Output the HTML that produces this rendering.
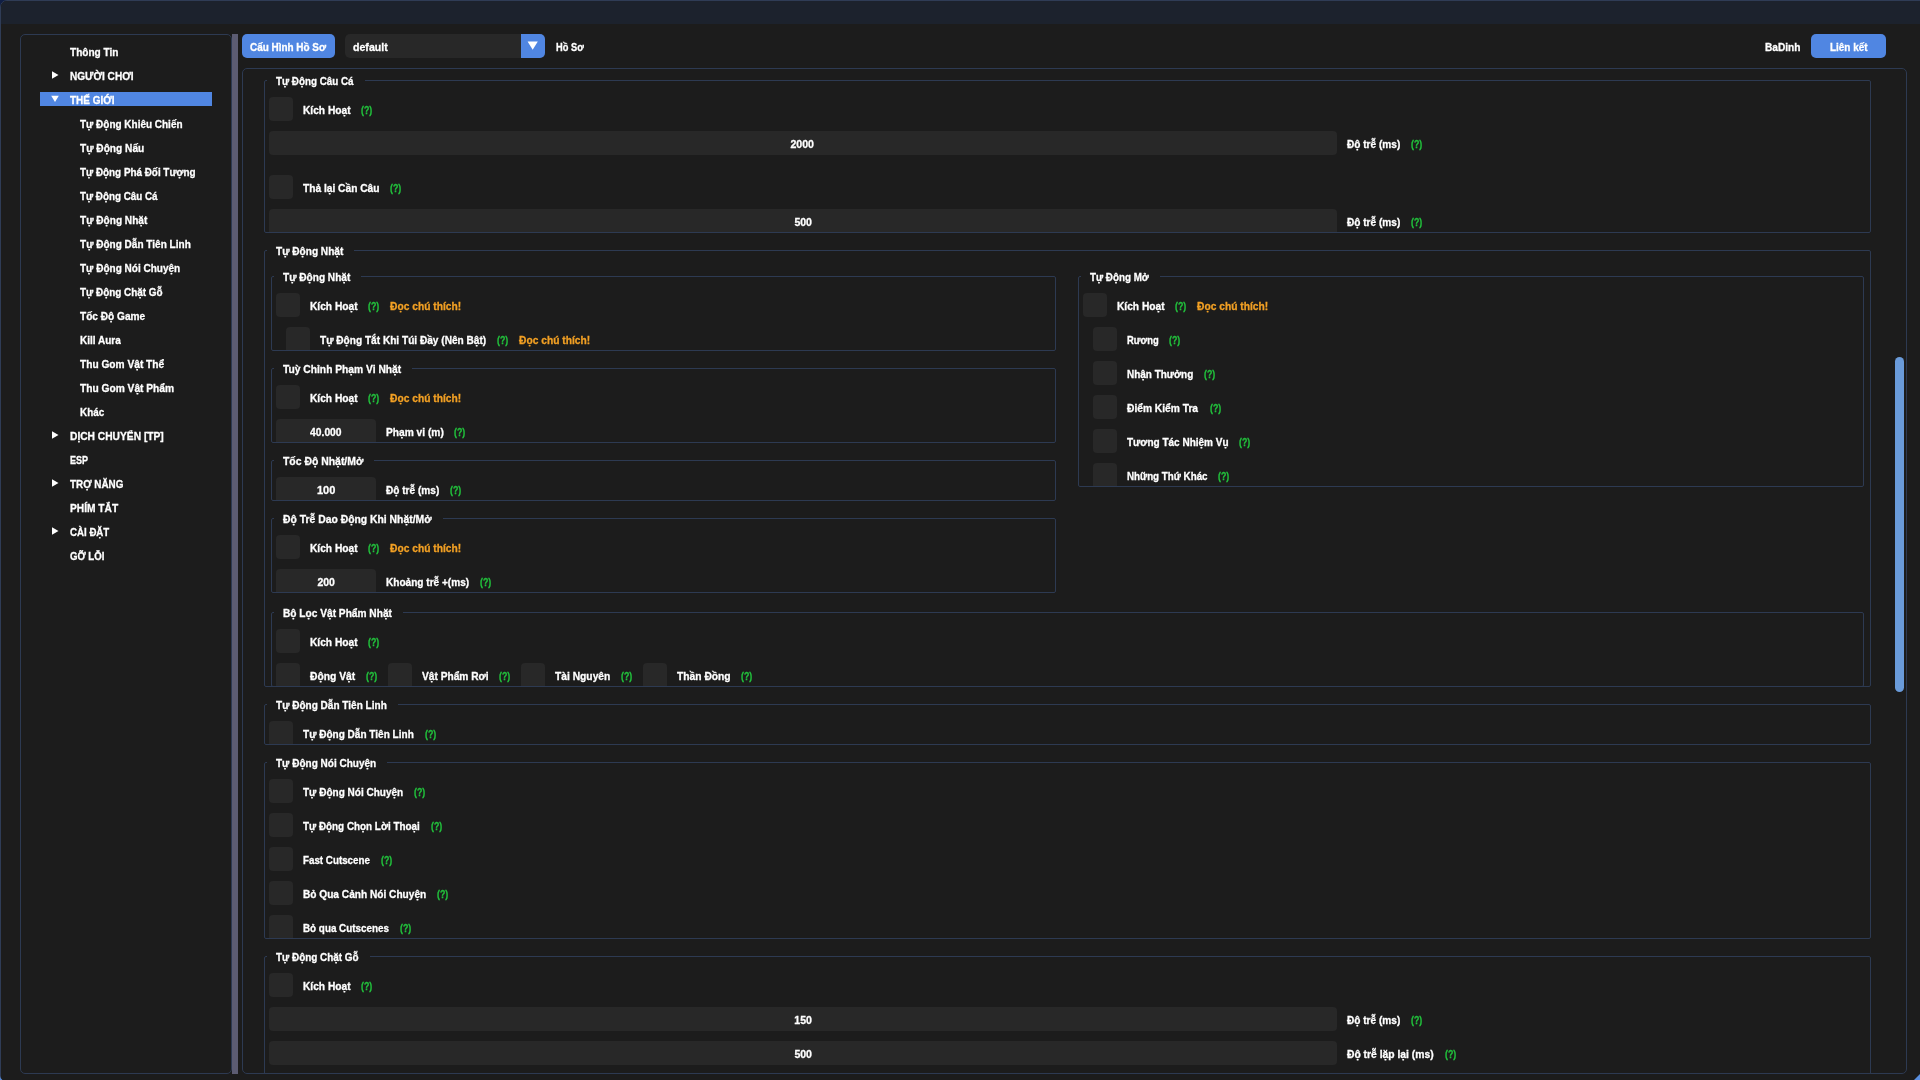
<!DOCTYPE html>
<html lang="vi"><head><meta charset="utf-8"><title>Menu</title>
<style>
html,body{margin:0;padding:0;width:1920px;height:1080px;overflow:hidden;background:#101f45}
body{position:relative;font:bold 11px/14px "Liberation Sans",sans-serif;color:#ffffff}
#win{position:absolute;left:0;top:0;width:1930px;height:1090px;background:#1c1c1c;border:1px solid #2f3c56;border-radius:7px 0 0 7px;box-sizing:border-box;overflow:hidden}
#title{position:absolute;left:0;top:0;width:1930px;height:24px;background:#1c222d}
#win div,#win span,#win svg{position:absolute}
#win>*{margin-left:-1px;margin-top:-1px}
.pn{border:1px solid #2d3a52;box-sizing:border-box;border-radius:5px}
.g{border:1px solid #2d3a52;box-sizing:border-box;border-radius:2px}
.gl{background:#1c1c1c;height:14px}
.t{white-space:pre;height:14px;line-height:14px;transform-origin:0 50%;-webkit-text-stroke:0.3px currentColor}
.c{transform-origin:50% 50%}
#main{left:0;top:0;width:1920px;height:1080px;overflow:hidden;will-change:transform}
</style></head><body>
<div id="win">
<div id="title"></div>
<div id="main">

<div class="pn" style="left:20px;top:34px;width:212px;height:1040px"></div>
<div style="left:232px;top:34px;width:6px;height:1040px;background:#5c5c72"></div>
<div style="left:40px;top:92px;width:172px;height:14px;background:#5086e2"></div>
<div style="left:242px;top:34px;width:93px;height:24px;background:#5086e2;border-radius:5px"></div>
<div style="left:345px;top:34px;width:200px;height:24px;background:#282828;border-radius:5px"></div>
<div style="left:521px;top:34px;width:24px;height:24px;background:#5086e2;border-radius:0 5px 5px 0"></div>
<svg style="left:527px;top:41px" width="12" height="10" viewBox="0 0 12 10"><path d="M0.6 0.5 L10.8 0.5 L5.7 8.8 Z" fill="#fff"/></svg>
<div style="left:1811px;top:34px;width:75px;height:24px;background:#5086e2;border-radius:5px"></div>
<div class="pn" style="left:242px;top:68px;width:1665px;height:1006px"></div>
<div style="left:1895px;top:357px;width:9px;height:335px;background:#6a9bda;border-radius:4.5px"></div>
<div id="clip" style="left:243px;top:69px;width:1663px;height:1004px;overflow:hidden">
<div class="g" style="left:21px;top:11px;width:1607px;height:153px"></div>
<div class="g" style="left:21px;top:181px;width:1607px;height:437px"></div>
<div class="g" style="left:28px;top:207px;width:785px;height:75px"></div>
<div class="g" style="left:28px;top:299px;width:785px;height:75px"></div>
<div class="g" style="left:28px;top:391px;width:785px;height:41px"></div>
<div class="g" style="left:28px;top:449px;width:785px;height:75px"></div>
<div class="g" style="left:28px;top:543px;width:1593px;height:75px"></div>
<div class="g" style="left:835px;top:207px;width:786px;height:211px"></div>
<div class="g" style="left:21px;top:635px;width:1607px;height:41px"></div>
<div class="g" style="left:21px;top:693px;width:1607px;height:177px"></div>
<div class="g" style="left:21px;top:887px;width:1607px;height:145px"></div>
<div style="left:26px;top:28px;width:24px;height:24px;background:#282828;border-radius:4px;"></div>
<div style="left:26px;top:62px;width:1068px;height:24px;background:#282828;border-radius:4px;"></div>
<div style="left:26px;top:106px;width:24px;height:24px;background:#282828;border-radius:4px;"></div>
<div style="left:26px;top:140px;width:1068px;height:23px;background:#282828;border-radius:4px 4px 0 0"></div>
<div style="left:33px;top:224px;width:24px;height:24px;background:#282828;border-radius:4px;"></div>
<div style="left:43px;top:258px;width:24px;height:23px;background:#282828;border-radius:4px 4px 0 0"></div>
<div style="left:33px;top:316px;width:24px;height:24px;background:#282828;border-radius:4px;"></div>
<div style="left:33px;top:350px;width:100px;height:23px;background:#282828;border-radius:4px 4px 0 0"></div>
<div style="left:33px;top:408px;width:100px;height:23px;background:#282828;border-radius:4px 4px 0 0"></div>
<div style="left:33px;top:466px;width:24px;height:24px;background:#282828;border-radius:4px;"></div>
<div style="left:33px;top:500px;width:100px;height:23px;background:#282828;border-radius:4px 4px 0 0"></div>
<div style="left:33px;top:560px;width:24px;height:24px;background:#282828;border-radius:4px;"></div>
<div style="left:33px;top:594px;width:24px;height:23px;background:#282828;border-radius:4px 4px 0 0"></div>
<div style="left:145px;top:594px;width:24px;height:23px;background:#282828;border-radius:4px 4px 0 0"></div>
<div style="left:278px;top:594px;width:24px;height:23px;background:#282828;border-radius:4px 4px 0 0"></div>
<div style="left:400px;top:594px;width:24px;height:23px;background:#282828;border-radius:4px 4px 0 0"></div>
<div style="left:840px;top:224px;width:24px;height:24px;background:#282828;border-radius:4px;"></div>
<div style="left:850px;top:258px;width:24px;height:24px;background:#282828;border-radius:4px"></div>
<div style="left:850px;top:292px;width:24px;height:24px;background:#282828;border-radius:4px"></div>
<div style="left:850px;top:326px;width:24px;height:24px;background:#282828;border-radius:4px"></div>
<div style="left:850px;top:360px;width:24px;height:24px;background:#282828;border-radius:4px"></div>
<div style="left:850px;top:394px;width:24px;height:23px;background:#282828;border-radius:4px 4px 0 0"></div>
<div style="left:26px;top:652px;width:24px;height:23px;background:#282828;border-radius:4px 4px 0 0"></div>
<div style="left:26px;top:710px;width:24px;height:24px;background:#282828;border-radius:4px"></div>
<div style="left:26px;top:744px;width:24px;height:24px;background:#282828;border-radius:4px"></div>
<div style="left:26px;top:778px;width:24px;height:24px;background:#282828;border-radius:4px"></div>
<div style="left:26px;top:812px;width:24px;height:24px;background:#282828;border-radius:4px"></div>
<div style="left:26px;top:846px;width:24px;height:23px;background:#282828;border-radius:4px 4px 0 0"></div>
<div style="left:26px;top:904px;width:24px;height:24px;background:#282828;border-radius:4px;"></div>
<div style="left:26px;top:938px;width:1068px;height:24px;background:#282828;border-radius:4px;"></div>
<div style="left:26px;top:972px;width:1068px;height:24px;background:#282828;border-radius:4px;"></div>
<div class="gl" style="left:24px;top:5px;width:98px"></div>
<span class="t" style="left:33px;top:5px;transform:scaleX(0.8931)">Tự Động Câu Cá</span>
<div class="gl" style="left:24px;top:175px;width:87px"></div>
<span class="t" style="left:33px;top:175px;transform:scaleX(0.9173)">Tự Động Nhặt</span>
<div class="gl" style="left:31px;top:201px;width:87px"></div>
<span class="t" style="left:40px;top:201px;transform:scaleX(0.9173)">Tự Động Nhặt</span>
<div class="gl" style="left:31px;top:293px;width:138px"></div>
<span class="t" style="left:40px;top:293px;transform:scaleX(0.9329)">Tuỳ Chỉnh Phạm Vi Nhặt</span>
<div class="gl" style="left:31px;top:385px;width:100px"></div>
<span class="t" style="left:40px;top:385px;transform:scaleX(0.9473)">Tốc Độ Nhặt/Mở</span>
<div class="gl" style="left:31px;top:443px;width:169px"></div>
<span class="t" style="left:40px;top:443px;transform:scaleX(0.9431)">Độ Trễ Dao Động Khi Nhặt/Mở</span>
<div class="gl" style="left:31px;top:537px;width:129px"></div>
<span class="t" style="left:40px;top:537px;transform:scaleX(0.9233)">Bộ Lọc Vật Phẩm Nhặt</span>
<div class="gl" style="left:838px;top:201px;width:79px"></div>
<span class="t" style="left:847px;top:201px;transform:scaleX(0.8929)">Tự Động Mở</span>
<div class="gl" style="left:24px;top:629px;width:131px"></div>
<span class="t" style="left:33px;top:629px;transform:scaleX(0.9125)">Tự Động Dẫn Tiên Linh</span>
<div class="gl" style="left:24px;top:687px;width:120px"></div>
<span class="t" style="left:33px;top:687px;transform:scaleX(0.9106)">Tự Động Nói Chuyện</span>
<div class="gl" style="left:24px;top:881px;width:103px"></div>
<span class="t" style="left:33px;top:881px;transform:scaleX(0.9012)">Tự Động Chặt Gỗ</span>
</div>
<span class="t" style="top:45px;left:70px;transform:scaleX(0.9152);">Thông Tin</span>
<span class="t" style="top:69px;left:70px;transform:scaleX(0.9148);">NGƯỜI CHƠI</span>
<span class="t" style="top:93px;left:70px;transform:scaleX(0.9044);">THẾ GIỚI</span>
<span class="t" style="top:117px;left:80px;transform:scaleX(0.9067);">Tự Động Khiêu Chiến</span>
<span class="t" style="top:141px;left:80px;transform:scaleX(0.9217);">Tự Động Nấu</span>
<span class="t" style="top:165px;left:80px;transform:scaleX(0.8974);">Tự Động Phá Đối Tượng</span>
<span class="t" style="top:189px;left:80px;transform:scaleX(0.8931);">Tự Động Câu Cá</span>
<span class="t" style="top:213px;left:80px;transform:scaleX(0.9173);">Tự Động Nhặt</span>
<span class="t" style="top:237px;left:80px;transform:scaleX(0.9125);">Tự Động Dẫn Tiên Linh</span>
<span class="t" style="top:261px;left:80px;transform:scaleX(0.9106);">Tự Động Nói Chuyện</span>
<span class="t" style="top:285px;left:80px;transform:scaleX(0.9012);">Tự Động Chặt Gỗ</span>
<span class="t" style="top:309px;left:80px;transform:scaleX(0.9189);">Tốc Độ Game</span>
<span class="t" style="top:333px;left:80px;transform:scaleX(0.9077);">Kill Aura</span>
<span class="t" style="top:357px;left:80px;transform:scaleX(0.9243);">Thu Gom Vật Thể</span>
<span class="t" style="top:381px;left:80px;transform:scaleX(0.9273);">Thu Gom Vật Phẩm</span>
<span class="t" style="top:405px;left:80px;transform:scaleX(0.8977);">Khác</span>
<span class="t" style="top:429px;left:70px;transform:scaleX(0.93);">DỊCH CHUYỂN [TP]</span>
<span class="t" style="top:453px;left:70px;transform:scaleX(0.8186);">ESP</span>
<span class="t" style="top:477px;left:70px;transform:scaleX(0.8977);">TRỢ NĂNG</span>
<span class="t" style="top:501px;left:70px;transform:scaleX(0.9271);">PHÍM TẮT</span>
<span class="t" style="top:525px;left:70px;transform:scaleX(0.8808);">CÀI ĐẶT</span>
<span class="t" style="top:549px;left:70px;transform:scaleX(0.875);">GỠ LỖI</span>
<span class="t" style="top:39.5px;left:250px;transform:scaleX(0.903);">Cấu Hình Hồ Sơ</span>
<span class="t" style="top:39.5px;left:353px;transform:scaleX(0.9623);">default</span>
<span class="t" style="top:39.5px;left:556px;transform:scaleX(0.845);">Hồ Sơ</span>
<span class="t" style="top:39.5px;left:1765px;transform:scaleX(0.9211);">BaDinh</span>
<span class="t" style="top:39.5px;left:1830px;transform:scaleX(0.903);">Liên kết</span>
<span class="t" style="top:103px;left:303px;transform:scaleX(0.9269);">Kích Hoạt</span>
<span class="t" style="top:103px;left:361px;transform:scaleX(0.7988);color:#22c03c;">(?)</span>
<span class="t c" style="top:137px;left:790.4px;transform:scaleX(0.9616);">2000</span>
<span class="t" style="top:137px;left:1347px;transform:scaleX(0.9172);">Độ trễ (ms)</span>
<span class="t" style="top:137px;left:1411px;transform:scaleX(0.7988);color:#22c03c;">(?)</span>
<span class="t" style="top:181px;left:303px;transform:scaleX(0.9266);">Thả lại Cần Câu</span>
<span class="t" style="top:181px;left:390px;transform:scaleX(0.7988);color:#22c03c;">(?)</span>
<span class="t c" style="top:215px;left:793.8px;transform:scaleX(0.9584);">500</span>
<span class="t" style="top:215px;left:1347px;transform:scaleX(0.9172);">Độ trễ (ms)</span>
<span class="t" style="top:215px;left:1411px;transform:scaleX(0.7988);color:#22c03c;">(?)</span>
<span class="t" style="top:299px;left:310px;transform:scaleX(0.9269);">Kích Hoạt</span>
<span class="t" style="top:299px;left:368px;transform:scaleX(0.7988);color:#22c03c;">(?)</span>
<span class="t" style="top:299px;left:390px;transform:scaleX(0.9309);color:#f2a024;">Đọc chú thích!</span>
<span class="t" style="top:333px;left:320px;transform:scaleX(0.9188);">Tự Động Tắt Khi Túi Đầy (Nên Bật)</span>
<span class="t" style="top:333px;left:497px;transform:scaleX(0.7988);color:#22c03c;">(?)</span>
<span class="t" style="top:333px;left:519px;transform:scaleX(0.9309);color:#f2a024;">Đọc chú thích!</span>
<span class="t" style="top:391px;left:310px;transform:scaleX(0.9269);">Kích Hoạt</span>
<span class="t" style="top:391px;left:368px;transform:scaleX(0.7988);color:#22c03c;">(?)</span>
<span class="t" style="top:391px;left:390px;transform:scaleX(0.9309);color:#f2a024;">Đọc chú thích!</span>
<span class="t c" style="top:425px;left:309.2px;transform:scaleX(0.9363);">40.000</span>
<span class="t" style="top:425px;left:386px;transform:scaleX(0.9272);">Phạm vi (m)</span>
<span class="t" style="top:425px;left:454px;transform:scaleX(0.7988);color:#22c03c;">(?)</span>
<span class="t c" style="top:483px;left:316.8px;transform:scaleX(1.0011);">100</span>
<span class="t" style="top:483px;left:386px;transform:scaleX(0.9172);">Độ trễ (ms)</span>
<span class="t" style="top:483px;left:450px;transform:scaleX(0.7988);color:#22c03c;">(?)</span>
<span class="t" style="top:541px;left:310px;transform:scaleX(0.9269);">Kích Hoạt</span>
<span class="t" style="top:541px;left:368px;transform:scaleX(0.7988);color:#22c03c;">(?)</span>
<span class="t" style="top:541px;left:390px;transform:scaleX(0.9309);color:#f2a024;">Đọc chú thích!</span>
<span class="t c" style="top:575px;left:316.8px;transform:scaleX(0.9512);">200</span>
<span class="t" style="top:575px;left:386px;transform:scaleX(0.916);">Khoảng trễ +(ms)</span>
<span class="t" style="top:575px;left:480px;transform:scaleX(0.7988);color:#22c03c;">(?)</span>
<span class="t" style="top:635px;left:310px;transform:scaleX(0.9269);">Kích Hoạt</span>
<span class="t" style="top:635px;left:368px;transform:scaleX(0.7988);color:#22c03c;">(?)</span>
<span class="t" style="top:669px;left:310px;transform:scaleX(0.9358);">Động Vật</span>
<span class="t" style="top:669px;left:366px;transform:scaleX(0.7988);color:#22c03c;">(?)</span>
<span class="t" style="top:669px;left:422px;transform:scaleX(0.9248);">Vật Phẩm Rơi</span>
<span class="t" style="top:669px;left:499px;transform:scaleX(0.7988);color:#22c03c;">(?)</span>
<span class="t" style="top:669px;left:555px;transform:scaleX(0.9334);">Tài Nguyên</span>
<span class="t" style="top:669px;left:621px;transform:scaleX(0.7988);color:#22c03c;">(?)</span>
<span class="t" style="top:669px;left:677px;transform:scaleX(0.9338);">Thần Đồng</span>
<span class="t" style="top:669px;left:741px;transform:scaleX(0.7988);color:#22c03c;">(?)</span>
<span class="t" style="top:299px;left:1117px;transform:scaleX(0.9269);">Kích Hoạt</span>
<span class="t" style="top:299px;left:1175px;transform:scaleX(0.7988);color:#22c03c;">(?)</span>
<span class="t" style="top:299px;left:1197px;transform:scaleX(0.9309);color:#f2a024;">Đọc chú thích!</span>
<span class="t" style="top:333px;left:1127px;transform:scaleX(0.8537);">Rương</span>
<span class="t" style="top:333px;left:1169px;transform:scaleX(0.7988);color:#22c03c;">(?)</span>
<span class="t" style="top:367px;left:1127px;transform:scaleX(0.905);">Nhận Thưởng</span>
<span class="t" style="top:367px;left:1204px;transform:scaleX(0.7988);color:#22c03c;">(?)</span>
<span class="t" style="top:401px;left:1127px;transform:scaleX(0.9297);">Điểm Kiểm Tra</span>
<span class="t" style="top:401px;left:1210px;transform:scaleX(0.7988);color:#22c03c;">(?)</span>
<span class="t" style="top:435px;left:1127px;transform:scaleX(0.9088);">Tương Tác Nhiệm Vụ</span>
<span class="t" style="top:435px;left:1239px;transform:scaleX(0.7988);color:#22c03c;">(?)</span>
<span class="t" style="top:469px;left:1127px;transform:scaleX(0.8899);">Những Thứ Khác</span>
<span class="t" style="top:469px;left:1218px;transform:scaleX(0.7988);color:#22c03c;">(?)</span>
<span class="t" style="top:727px;left:303px;transform:scaleX(0.9125);">Tự Động Dẫn Tiên Linh</span>
<span class="t" style="top:727px;left:425px;transform:scaleX(0.7988);color:#22c03c;">(?)</span>
<span class="t" style="top:785px;left:303px;transform:scaleX(0.9106);">Tự Động Nói Chuyện</span>
<span class="t" style="top:785px;left:414px;transform:scaleX(0.7988);color:#22c03c;">(?)</span>
<span class="t" style="top:819px;left:303px;transform:scaleX(0.8977);">Tự Động Chọn Lời Thoại</span>
<span class="t" style="top:819px;left:431px;transform:scaleX(0.7988);color:#22c03c;">(?)</span>
<span class="t" style="top:853px;left:303px;transform:scaleX(0.8899);">Fast Cutscene</span>
<span class="t" style="top:853px;left:381px;transform:scaleX(0.7988);color:#22c03c;">(?)</span>
<span class="t" style="top:887px;left:303px;transform:scaleX(0.9206);">Bỏ Qua Cảnh Nói Chuyện</span>
<span class="t" style="top:887px;left:437px;transform:scaleX(0.7988);color:#22c03c;">(?)</span>
<span class="t" style="top:921px;left:303px;transform:scaleX(0.8956);">Bỏ qua Cutscenes</span>
<span class="t" style="top:921px;left:400px;transform:scaleX(0.7988);color:#22c03c;">(?)</span>
<span class="t" style="top:979px;left:303px;transform:scaleX(0.9269);">Kích Hoạt</span>
<span class="t" style="top:979px;left:361px;transform:scaleX(0.7988);color:#22c03c;">(?)</span>
<span class="t c" style="top:1013px;left:793.8px;transform:scaleX(0.9605);">150</span>
<span class="t" style="top:1013px;left:1347px;transform:scaleX(0.9172);">Độ trễ (ms)</span>
<span class="t" style="top:1013px;left:1411px;transform:scaleX(0.7988);color:#22c03c;">(?)</span>
<span class="t c" style="top:1047px;left:793.8px;transform:scaleX(0.9584);">500</span>
<span class="t" style="top:1047px;left:1347px;transform:scaleX(0.9382);">Độ trễ lặp lại (ms)</span>
<span class="t" style="top:1047px;left:1445px;transform:scaleX(0.7988);color:#22c03c;">(?)</span>
<svg style="left:51px;top:70px" width="8" height="10" viewBox="0 0 8 10"><path d="M1.0 1.2 L7.5 5 L1.0 8.8 Z" fill="#fff"/></svg>
<svg style="left:50px;top:95px" width="10" height="8" viewBox="0 0 10 8"><path d="M1.2 0.7 L8.8 0.7 L5 7.1 Z" fill="#fff"/></svg>
<svg style="left:51px;top:430px" width="8" height="10" viewBox="0 0 8 10"><path d="M1.0 1.2 L7.5 5 L1.0 8.8 Z" fill="#fff"/></svg>
<svg style="left:51px;top:478px" width="8" height="10" viewBox="0 0 8 10"><path d="M1.0 1.2 L7.5 5 L1.0 8.8 Z" fill="#fff"/></svg>
<svg style="left:51px;top:526px" width="8" height="10" viewBox="0 0 8 10"><path d="M1.0 1.2 L7.5 5 L1.0 8.8 Z" fill="#fff"/></svg>
</div></div>
<svg style="position:absolute;left:0px;top:1070px" width="10" height="10" viewBox="0 0 10 10"><path d="M0 6 Q0.3 8.8 2.4 10 L0 10 Z" fill="#5689d6"/></svg>
<svg style="position:absolute;left:1910px;top:1070px" width="10" height="10" viewBox="0 0 10 10"><path d="M10 4 L10 10 L4 10 Z" fill="#5a8fe0"/></svg>
</body></html>
